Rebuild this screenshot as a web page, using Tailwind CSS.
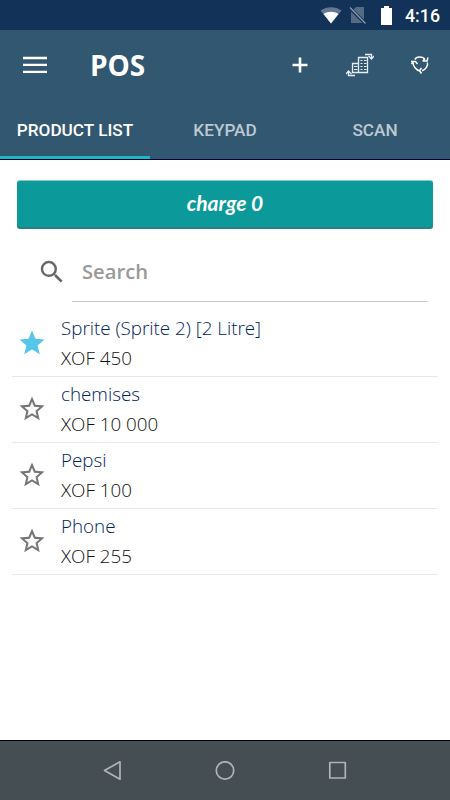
<!DOCTYPE html>
<html lang="en">
<head>
    <meta charset="UTF-8">
    <meta name="viewport" content="width=device-width, initial-scale=1.0">
    <title>POS</title>
    <script src="https://cdn.jsdelivr.net/npm/@tailwindcss/browser@4"></script>
</head>
<body class="bg-white w-[450px] h-[800px] overflow-hidden flex flex-col font-['Open_Sans',sans-serif]">
    <!-- Status bar -->
    <div class="h-[30px] shrink-0 bg-[#123257] flex items-center justify-end pr-[10px] text-white">
        <svg class="w-[22px] h-[18px]" viewBox="0 0 22 18">
            <path d="M.5 4.5C6.500 0 15.500 0 21.500 4.500L11 17.500Z" fill="#fff" fill-opacity=".35"/>
            <path d="M3.500 8C8 5 14 5 18.500 8L11 17.500Z" fill="#fff"/>
        </svg>
        <svg class="w-[18px] h-[20px] ml-[7px]" viewBox="0 0 18 20">
            <path d="M7 2H15V14.500L4.500 4.500ZM2 6.500L13.500 18H2Z" fill="#fff" fill-opacity=".28"/>
            <path d="M1 2.500L16.500 18.500" stroke="#8fa0b3" stroke-width="1.200"/>
        </svg>
        <svg class="w-[11px] h-[19px] ml-[14px]" viewBox="0 0 11 19">
            <path d="M3 0H8V2H11V19H0V2H3Z" fill="#fff"/>
        </svg>
        <span class="ml-[13px] pt-px text-[17.800px] leading-none font-medium font-['Roboto',sans-serif]">4:16</span>
    </div>

    <!-- App bar -->
    <header class="h-[130px] shrink-0 bg-[#325770] border-b border-[#00003c] flex flex-col">
        <div class="h-[70px] flex items-center pl-[23px] pr-[20px]">
            <svg class="w-[24px] h-[18px]" viewBox="0 0 24 18">
                <path d="M0 10.500H24M0 17.500H24" stroke="#001f50" stroke-width="1"/>
                <path d="M0 2H24M0 9H24M0 16H24" stroke="#fff" stroke-width="2.500"/>
            </svg>
            <h1 class="ml-[43px] text-[28px] leading-[40px] font-bold text-white">POS</h1>
            <div class="ml-auto flex items-center">
                <svg class="w-[16px] h-[16px]" viewBox="0 0 16 16">
                    <path d="M8 .5V15.500M.5 8H15.500" stroke="#fff" stroke-width="2.600"/>
                </svg>
                <svg class="w-[28px] h-[24px] ml-[38px]" viewBox="0 0 28 24" fill="none" stroke="#e6edf3">
                    <path d="M12.500 19.500V4.500H21.500V19.500ZM12.500 10.500H6.500V19.500H12.500" stroke-width="1.300"/>
                    <path d="M14.500 7.500H16.500M18 7.500H20.500M14.500 10.500H16.500M18 10.500H20.500M14.500 13.500H16.500M18 13.500H20.500M14.500 16.500H16.500M18 16.500H20.500M8 13.500H11.500M8 16.500H11.500"/>
                    <path d="M19 1.500H25.500V5M22.500 3L25.500 6L28 3M9 22.500H2.500V19M0 21L2.500 18L5.500 21" stroke-width="1.300"/>
                </svg>
                <svg class="w-[20px] h-[20px] ml-[36px]" viewBox="0 0 20 20" fill="none" stroke="#fff" stroke-width="1.500">
                    <path d="M5 4.500C6 1.200 13 1 15 4.500M17.300 7.500C18.500 10 15.500 15 12 15.700M9.500 15.700C6.500 15.500 2.500 11 3.300 7.500"/>
                    <path d="M18 2.500L17 6H12.500M1 6.500H5.500L7.500 9M13 6.500L14.500 3.500M11.500 13L9.500 15.700L11.500 18.500M1.500 9L4 6"/>
                </svg>
            </div>
        </div>
        <nav class="grow grid grid-cols-3 text-center text-[17.200px] font-medium font-['Roboto',sans-serif]">
            <div class="pt-[5px] flex items-center justify-center border-b-[3px] border-[#1fb8bd] text-white whitespace-nowrap">PRODUCT LIST</div>
            <div class="pt-[5px] flex items-center justify-center border-b-[3px] border-transparent text-[#bcc8d2]">KEYPAD</div>
            <div class="pt-[5px] flex items-center justify-center border-b-[3px] border-transparent text-[#bcc8d2]">SCAN</div>
        </nav>
    </header>

    <main class="grow flex flex-col">
        <!-- Charge button -->
        <button class="mt-[20px] mx-[17px] h-[49px] shrink-0 rounded-[3px] bg-[#0b9999] border-t border-t-[#8bc9c9] border-b-2 border-b-[#2b8080] pb-[4px] text-white text-[21px] leading-none font-bold italic font-['Lato',sans-serif]">charge 0</button>

        <!-- Search -->
        <div class="h-[82px] shrink-0 pt-[18px] pl-[37px] pr-[22px] flex">
            <svg class="w-[30px] h-[30px] mt-[10px]" viewBox="0 0 24 24" fill="#666">
                <path d="M15.500 14h-.79l-.28-.27A6.471 6.471 0 0 0 16 9.500 6.500 6.500 0 1 0 9.500 16c1.610 0 3.090-.59 4.230-1.570l.27.28v.79l5 4.990L20.490 19l-4.990-5zm-6 0C7.010 14 5 11.990 5 9.500S7.010 5 9.500 5 14 7.010 14 9.500 11.990 14 9.500 14z"/>
            </svg>
            <div class="ml-[5px] pl-[10px] pb-[5px] h-[55px] grow border-b border-[#c8c8c8] flex items-center text-[20.200px] text-[#999] font-semibold">Search</div>
        </div>

        <!-- Product list, rows are filled in below -->
        <ul id="products" class="mx-[12px]"></ul>
    </main>

    <!-- Navigation bar -->
    <footer class="h-[60px] shrink-0 bg-[#454e53] border-t border-black grid grid-cols-3 items-center px-[56px]">
        <svg class="w-[20px] h-[20px] justify-self-center" viewBox="0 0 20 20" fill="none" stroke="#b0b4b6" stroke-width="1.700" stroke-linejoin="round">
            <path d="M2.500 9.500L18 .8V18.200Z"/>
        </svg>
        <svg class="w-[20px] h-[20px] justify-self-center" viewBox="0 0 20 20" fill="none" stroke="#b0b4b6" stroke-width="1.700">
            <circle cx="10" cy="9.500" r="8.700"/>
        </svg>
        <svg class="w-[20px] h-[20px] justify-self-center" viewBox="0 0 20 20" fill="none" stroke="#b0b4b6" stroke-width="1.700" stroke-linejoin="round">
            <rect x="1.800" y="1.500" width="15.500" height="15.500"/>
        </svg>
    </footer>

    <script>
        const products = [
            { name: 'Sprite (Sprite 2) [2 Litre]', price: 'XOF 450', starred: true },
            { name: 'chemises', price: 'XOF 10 000', starred: false },
            { name: 'Pepsi', price: 'XOF 100', starred: false },
            { name: 'Phone', price: 'XOF 255', starred: false }
        ];

        const fullStar = 'M12 17.270L18.180 21l-1.640-7.030L22 9.240l-7.190-.61L12 2 9.190 8.630 2 9.240l5.460 4.730L5.820 21z';
        const emptyStar = 'M22 9.240l-7.190-.62L12 2 9.190 8.630 2 9.240l5.460 4.730L5.820 21 12 17.270 18.180 21l-1.630-7.030L22 9.240zM12 15.400l-3.760 2.270 1-4.280-3.320-2.880 4.380-.38L12 6.100l1.710 4.040 4.380.38-3.320 2.880 1 4.280L12 15.400z';

        document.getElementById('products').innerHTML = products.map(product => `
            <li class="h-[66px] pl-[5px] pb-[2px] border-b border-[#e8e8e8] flex items-center">
                <svg class="w-[30px] h-[30px] shrink-0 ${product.starred ? 'fill-[#56c7e8]' : 'fill-[#757575]'}" viewBox="0 0 24 24">
                    <path d="${product.starred ? fullStar : emptyStar}"/>
                </svg>
                <div class="ml-[14px] text-[18.800px] leading-[30px] font-light whitespace-nowrap">
                    <p class="text-[#00245c]">${product.name}</p>
                    <p class="text-[#111]">${product.price}</p>
                </div>
            </li>
        `).join('');
    </script>
</body>
</html>
